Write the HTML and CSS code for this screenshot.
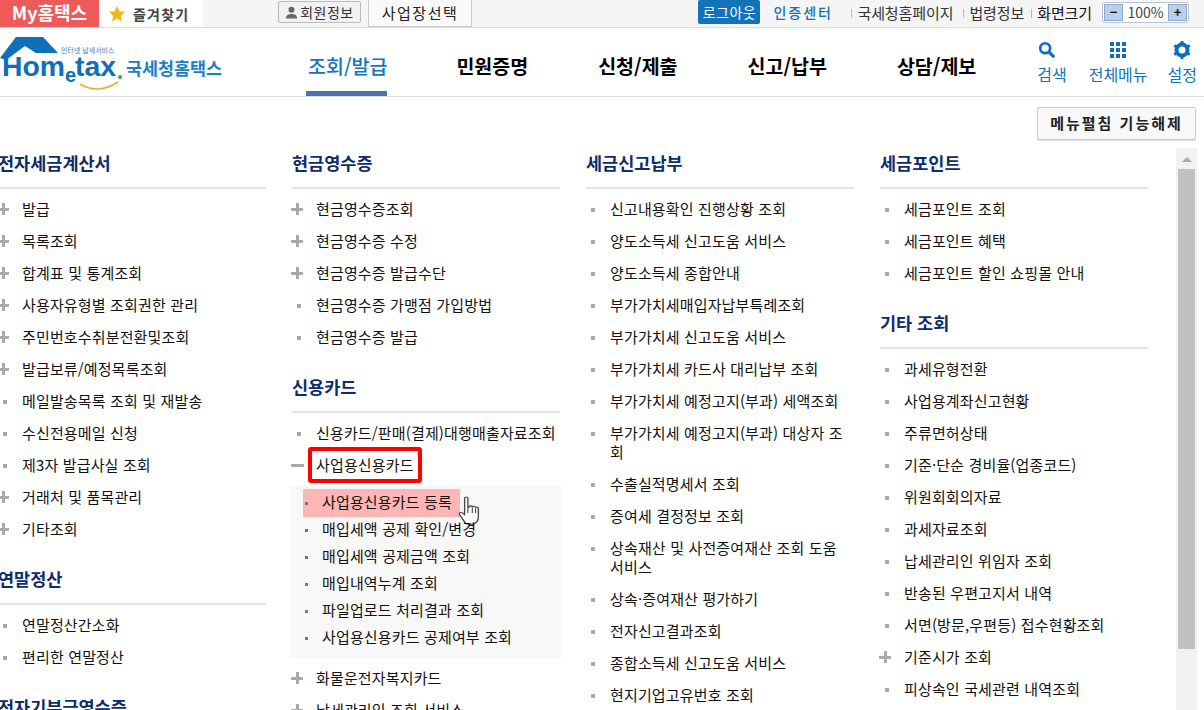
FILE: index.html
```html
<!DOCTYPE html>
<html lang="ko">
<head>
<meta charset="utf-8">
<title>국세청 홈택스</title>
<link rel="stylesheet" href="styles.css">
</head>
<body>
<div class="topbar">
  <a class="my">My홈택스</a>
  <a class="fav"><svg class="star" viewBox="0 0 20 20" width="18" height="18"><path d="M10 1l2.7 5.9 6.3.7-4.7 4.3 1.3 6.3L10 15l-5.6 3.2 1.3-6.3L1 7.600l6.300-.7z" fill="#f5b81c"/></svg>즐겨찾기</a>
  <a class="memberbtn"><svg viewBox="0 0 14 14" width="13" height="13"><circle cx="7" cy="4" r="3.200" fill="#666"/><path d="M1 13.500c0-3.500 2-5 6-5s6 1.500 6 5z" fill="#666"/></svg>회원정보</a>
  <a class="bizbtn">사업장선택</a>
  <div class="topright">
    <a class="logout">로그아웃</a>
    <a class="cert">인증센터</a>
    <a class="toplink">국세청홈페이지</a>
    <a class="toplink law">법령정보</a>
    <a class="toplink dark">화면크기</a>
    <div class="zoombox"><span class="zbtn">−</span><span class="zval">100%</span><span class="zbtn">+</span></div>
  </div>
</div>

<header class="nav">
  <svg class="logo" viewBox="0 0 224 56" width="224" height="56">
    <path d="M0 21 L16 0 H43 L58 16 H36 L25 9 L6 23 Z" fill="#0f6fb8"/>
    <text x="61" y="16" class="logo-tiny">인터넷 납세서비스</text>
    <text x="2" y="39" class="logo-main" textLength="63" lengthAdjust="spacingAndGlyphs">Hom</text>
    <text x="65" y="45" class="logo-e">e</text>
    <text x="75" y="39" class="logo-main" textLength="41" lengthAdjust="spacingAndGlyphs">tax</text>
    <circle cx="120" cy="40" r="2" fill="#35a853"/>
    <path d="M80 47 Q98 58 118 45" fill="none" stroke="#f0a93c" stroke-width="1.500"/>
    <text x="126" y="38" class="logo-kr">국세청홈택스</text>
  </svg>
  <nav class="gnb">
    <a class="gnb-item active">조회/발급</a>
    <a class="gnb-item">민원증명</a>
    <a class="gnb-item">신청/제출</a>
    <a class="gnb-item">신고/납부</a>
    <a class="gnb-item">상담/제보</a>
  </nav>
  <div class="tools">
    <a class="tool tool-search"><svg viewBox="0 0 20 20" width="18" height="18"><circle cx="8" cy="8" r="5.500" fill="none" stroke="#0f6fb8" stroke-width="3"/><path d="M12 12l6 6" stroke="#0f6fb8" stroke-width="3.400"/></svg>검색</a>
    <a class="tool tool-all"><svg viewBox="0 0 18 18" width="18" height="18" fill="#0f6fb8"><rect x="1" y="1" width="4" height="4"/><rect x="7" y="1" width="4" height="4"/><rect x="13" y="1" width="4" height="4"/><rect x="1" y="7" width="4" height="4"/><rect x="7" y="7" width="4" height="4"/><rect x="13" y="7" width="4" height="4"/><rect x="1" y="13" width="4" height="4"/><rect x="7" y="13" width="4" height="4"/><rect x="13" y="13" width="4" height="4"/></svg>전체메뉴</a>
    <a class="tool tool-set"><svg viewBox="0 0 18 18" width="18" height="18"><circle cx="9" cy="9" r="5.500" fill="none" stroke="#0f6fb8" stroke-width="4"/><path d="M9 0v4M9 14v4M1.200 4.500l3.500 2M13.300 11.500l3.500 2M1.200 13.500l3.500-2M13.300 6.500l3.500-2" stroke="#0f6fb8" stroke-width="3"/></svg>설정</a>
  </div>
</header>

<div class="actions"><a class="unfold">메뉴펼침 기능해제</a></div>

<main class="content">
  <div class="columns">
    <section class="col">
      <h2>전자세금계산서</h2>
      <ul>
        <li class="plus">발급</li>
        <li class="plus">목록조회</li>
        <li class="plus">합계표 및 통계조회</li>
        <li class="plus">사용자유형별 조회권한 관리</li>
        <li class="plus">주민번호수취분전환및조회</li>
        <li class="plus">발급보류/예정목록조회</li>
        <li class="dot">메일발송목록 조회 및 재발송</li>
        <li class="dot">수신전용메일 신청</li>
        <li class="dot">제3자 발급사실 조회</li>
        <li class="plus">거래처 및 품목관리</li>
        <li class="plus">기타조회</li>
      </ul>
      <h2 class="next">연말정산</h2>
      <ul>
        <li class="dot">연말정산간소화</li>
        <li class="dot">편리한 연말정산</li>
      </ul>
      <h2 class="next">전자기부금영수증</h2>
    </section>

    <section class="col">
      <h2>현금영수증</h2>
      <ul>
        <li class="plus">현금영수증조회</li>
        <li class="plus">현금영수증 수정</li>
        <li class="plus">현금영수증 발급수단</li>
        <li class="dot">현금영수증 가맹점 가입방법</li>
        <li class="dot">현금영수증 발급</li>
      </ul>
      <h2 class="next">신용카드</h2>
      <ul>
        <li class="dot">신용카드/판매(결제)대행매출자료조회</li>
        <li class="minus"><span class="redbox">사업용신용카드</span>
          <ul class="sub">
            <li class="current">사업용신용카드 등록
              <svg class="hand" viewBox="0 0 20 32" width="22" height="30" preserveAspectRatio="none"><path d="M6 2.500c0-2 3-2 3 0V12l1 0c0-2 3-2 3 0 0-1.500 3-1.500 3 .5 0-1 2.500-1 2.500 1V22c0 4-2 7-5 8H9c-2 0-3-2-4-4L1.500 20c-1-2 1-3.500 2.500-2L6 20z" fill="#fff" stroke="#444" stroke-width="1.200"/><path d="M9 12v6M13 12v6M16 13v5" stroke="#444" stroke-width="1"/></svg>
            </li>
            <li>매입세액 공제 확인/변경</li>
            <li>매입세액 공제금액 조회</li>
            <li>매입내역누계 조회</li>
            <li>파일업로드 처리결과 조회</li>
            <li>사업용신용카드 공제여부 조회</li>
          </ul>
        </li>
        <li class="plus">화물운전자복지카드</li>
        <li class="plus">납세관리인 조회 서비스</li>
      </ul>
    </section>

    <section class="col">
      <h2>세금신고납부</h2>
      <ul>
        <li class="dot">신고내용확인 진행상황 조회</li>
        <li class="dot">양도소득세 신고도움 서비스</li>
        <li class="dot">양도소득세 종합안내</li>
        <li class="dot">부가가치세매입자납부특례조회</li>
        <li class="dot">부가가치세 신고도움 서비스</li>
        <li class="dot">부가가치세 카드사 대리납부 조회</li>
        <li class="dot">부가가치세 예정고지(부과) 세액조회</li>
        <li class="dot">부가가치세 예정고지(부과) 대상자 조회</li>
        <li class="dot">수출실적명세서 조회</li>
        <li class="dot">증여세 결정정보 조회</li>
        <li class="dot">상속재산 및 사전증여재산 조회 도움 서비스</li>
        <li class="dot">상속·증여재산 평가하기</li>
        <li class="dot">전자신고결과조회</li>
        <li class="dot">종합소득세 신고도움 서비스</li>
        <li class="dot">현지기업고유번호 조회</li>
      </ul>
    </section>

    <section class="col">
      <h2>세금포인트</h2>
      <ul>
        <li class="dot">세금포인트 조회</li>
        <li class="dot">세금포인트 혜택</li>
        <li class="dot">세금포인트 할인 쇼핑몰 안내</li>
      </ul>
      <h2 class="next">기타 조회</h2>
      <ul>
        <li class="dot">과세유형전환</li>
        <li class="dot">사업용계좌신고현황</li>
        <li class="dot">주류면허상태</li>
        <li class="dot">기준·단순 경비율(업종코드)</li>
        <li class="dot">위원회회의자료</li>
        <li class="dot">과세자료조회</li>
        <li class="dot">납세관리인 위임자 조회</li>
        <li class="dot">반송된 우편고지서 내역</li>
        <li class="dot">서면(방문,우편등) 접수현황조회</li>
        <li class="plus">기준시가 조회</li>
        <li class="dot">피상속인 국세관련 내역조회</li>
      </ul>
    </section>
  </div>
  <div class="scrollbar"><span class="arrow"></span><span class="thumb"></span></div>
</main>
</body>
</html>
```
FILE: styles.css
```css
* { box-sizing: border-box; }
html, body { margin: 0; padding: 0; height: 710px; overflow: hidden; background: #fff; }
body { font-family: "Noto Sans CJK KR", "Noto Sans", sans-serif; font-size: 15px; color: #111; }
ul { list-style: none; margin: 0; padding: 0; }

.topbar { display: flex; align-items: flex-start; height: 28px; background: #f5f5f5; border-bottom: 1px solid #ddd; }
.my { flex: none; width: 99px; height: 27px; background: #ee5a5a; color: #fff; font-weight: 700; font-size: 18px; line-height: 25px; text-align: center; }
.fav { flex: none; display: flex; align-items: center; gap: 7px; width: 104px; height: 27px; padding-left: 9px; background: #fff; color: #444; font-size: 14px; font-weight: 700; letter-spacing: 1.200px; }
.memberbtn { flex: none; display: flex; align-items: center; gap: 2px; margin: 1px 0 0 75px; width: 83px; height: 22px; justify-content: center; background: #f2f2f2; border: 1px solid #bbb; border-radius: 2px; font-size: 14px; color: #333; letter-spacing: 0.5px; }
.bizbtn { flex: none; margin-left: 7px; width: 104px; height: 27px; background: #fafafa; border: 1px solid #ccc; border-top: 0; text-align: center; line-height: 25px; font-size: 15px; letter-spacing: 1.500px; color: #222; }
.topright { display: flex; align-items: center; height: 24px; margin-left: auto; padding-right: 15px; }
.logout { width: 62px; height: 24px; background: #1273b8; color: #fff; font-size: 14px; text-align: center; line-height: 24px; border-radius: 2px; letter-spacing: 0.5px; }
.cert { margin-left: 13px; width: 73px; color: #1273b8; font-size: 14px; font-weight: 500; letter-spacing: 2px; white-space: nowrap; }
.toplink { position: relative; font-size: 15px; color: #333; padding-left: 6px; margin-left: 5px; white-space: nowrap; letter-spacing: -0.1px; }
.toplink.law { margin-left: 10px; }
.toplink::before { content: ""; position: absolute; left: 0; top: 7px; width: 1px; height: 9px; background: #bbb; }
.toplink.dark { color: #111; margin-left: 7px; }
.zoombox { display: flex; align-items: center; gap: 4px; margin-left: 10px; width: 87px; height: 21px; border: 1px solid #b9c4d4; border-radius: 3px; background: #fff; padding: 1px; }
.zbtn { width: 19px; height: 17px; background: #b9d0ea; border: 1px solid #8ea9cc; color: #111; font-weight: 700; line-height: 14px; font-size: 13px; text-align: center; }
.zval { flex: 1; font-size: 14px; color: #444; text-align: center; white-space: nowrap; }

.nav { display: flex; height: 69px; border-bottom: 1px solid #ddd; position: relative; }
.logo { display: block; margin-top: 9px; flex: none; }
.logo-tiny { font-size: 7px; fill: #3c7fc0; }
.logo-main { font-family: "Liberation Sans", sans-serif; font-size: 27px; font-weight: 700; fill: #0f6fb8; }
.logo-e { font-family: "Liberation Sans", sans-serif; font-size: 20px; font-weight: 700; fill: #0f6fb8; }
.logo-kr { font-size: 17.4px; font-weight: 700; fill: #1a80c4; }
.gnb { display: flex; gap: 70px; margin-left: 82px; }
.gnb-item { height: 68px; padding-top: 23px; font-size: 19.500px; font-weight: 700; line-height: 30px; color: #000; white-space: nowrap; }
.gnb-item.active { color: #1273b8; font-weight: 500; padding: 23px 0 0 2px; margin-right: -1px; border-bottom: 5px solid #4a72ad; }
.tools { display: flex; margin-left: auto; padding-right: 7px; }
.tool { display: flex; flex-direction: column; align-items: center; padding-top: 13px; color: #1273b8; font-size: 16px; line-height: 24px; white-space: nowrap; }
.tool svg { margin-bottom: 3px; }
.tool-search { margin-right: 22px; }
.tool-all { margin-right: 20px; }
.tool-search svg { align-self: flex-start; margin-left: 1px; }

.actions { display: flex; justify-content: flex-end; height: 51px; padding: 10px 8px 0 0; }
.unfold { width: 159px; height: 33px; background: #f8f8f8; border: 1px solid #ccc; border-radius: 2px; box-shadow: 0 1px 1px #ddd; text-align: center; line-height: 30px; font-size: 15px; font-weight: 700; letter-spacing: 2px; color: #222; white-space: nowrap; }

.content { display: flex; align-items: flex-start; }
.columns { display: grid; grid-template-columns: repeat(4, 268px); column-gap: 26px; margin-left: -2px; width: 1150px; flex: none; }
.col { min-width: 0; letter-spacing: 0.15px; }
.col h2 { margin: 0 0 4px; height: 41px; font-size: 17.500px; font-weight: 700; line-height: 30px; color: #0c2c6c; border-bottom: 2px solid #e2e2e2; white-space: nowrap; letter-spacing: 0; }
.col h2.next { margin-top: 18px; height: 42px; padding-top: 1px; }
.col li { position: relative; padding: 6px 0 7px 24px; line-height: 19px; word-break: break-all; }
.col li.plus::before { content: ""; position: absolute; left: -1px; top: 10px; width: 12px; height: 12px; background:
  linear-gradient(#aaa, #aaa) center / 12px 3px no-repeat,
  linear-gradient(#aaa, #aaa) center / 3px 12px no-repeat; }
.col li.minus::before { content: ""; position: absolute; left: -1px; top: 15px; width: 13px; height: 3px; background: #aaa; }
.col li.dot::before { content: ""; position: absolute; left: 5px; top: 15px; width: 4px; height: 4px; background: #aaa; }
.redbox { display: inline-block; margin: -8px 0 -8px -8px; padding: 4px; height: 36px; line-height: 20px; border: 4px solid #f00; border-radius: 3px; background: #fff; position: relative; white-space: nowrap; }
.col li.minus { padding-bottom: 0; }
.sub { margin: 11px 0 4px -25px; width: 270px; background: #f8f8f8; padding: 3px 0 7px 12px; }
.col .sub li { padding: 3px 0 5px 19px; height: 27px; white-space: nowrap; }
.col .sub li::before { content: ""; position: absolute; left: 2px; top: 13px; width: 3px; height: 3px; background: #777; }
.col .sub li.current { width: 157px; height: 28px; margin-bottom: -1px; background: #fdb6b6; }
.hand { position: absolute; left: 155px; top: 7px; }

.scrollbar { position: relative; flex: none; width: 21px; height: 570px; margin-left: 28px; background: #f1f1f1; padding: 21px 2px 0; }
.arrow { position: absolute; left: 6px; top: 9px; width: 0; height: 0; border-left: 5px solid transparent; border-right: 5px solid transparent; border-bottom: 5px solid #aaa; }
.thumb { display: block; height: 480px; background: #c1c1c1; }
```
